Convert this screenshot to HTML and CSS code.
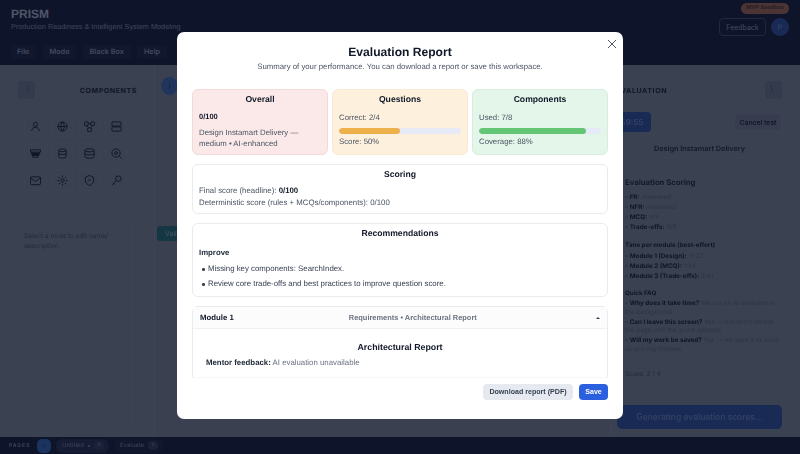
FILE: index.html
```html
<!DOCTYPE html>
<html lang="en">
<head>
<meta charset="utf-8">
<title>PRISM</title>
<link rel="stylesheet" href="styles.css">
</head>
<body>
<div class="app">
  <header class="top">
    <div class="top-row">
      <div class="brand">
        <div class="brand-name">PRISM</div>
        <div class="brand-sub">Production Readiness &amp; Intelligent System Modeling</div>
      </div>
      <div class="top-right">
        <span class="sandbox">MVP Sandbox</span>
        <div class="top-actions">
          <button class="feedback">Feedback</button>
          <span class="avatar">P</span>
        </div>
      </div>
    </div>
    <nav class="menu">
      <span class="menu-item">File</span>
      <span class="menu-item">Mode</span>
      <span class="menu-item">Black Box</span>
      <span class="menu-item">Help</span>
    </nav>
  </header>
  <main class="work">
    <aside class="left">
      <div class="panel-head">
        <span class="collapse">〈</span>
        <span class="panel-title">COMPONENTS</span>
      </div>
      <div class="palette">
        <span class="tile"><svg viewBox="0 0 24 24"><circle cx="12" cy="7.500" r="4.500"/><path d="M4 22c0-5 3-8 8-8s8 3 8 8"/></svg></span>
        <span class="tile"><svg viewBox="0 0 24 24"><circle cx="12" cy="12" r="10"/><path d="M2 12h20M12 2c-5 5-5 15 0 20M12 2c5 5 5 15 0 20"/></svg></span>
        <span class="tile"><svg viewBox="0 0 24 24"><rect x="1" y="2" width="8" height="8" rx="1.500"/><rect x="15" y="2" width="8" height="8" rx="1.500"/><rect x="8" y="15" width="8" height="8" rx="1.500"/><path d="M9 6h6M6 10l4 5M18 10l-4 5"/></svg></span>
        <span class="tile"><svg viewBox="0 0 24 24"><rect x="2" y="2" width="20" height="9" rx="1"/><rect x="2" y="13" width="20" height="9" rx="1"/></svg></span>
        <span class="tile"><svg viewBox="0 0 24 24"><path d="M1 4h22v5H1zM3 9l2 7h14l2-7M6 16v4h12v-4"/><path class="solid" d="M4 11h16l-1.500 5h-13z"/></svg></span>
        <span class="tile"><svg viewBox="0 0 24 24"><ellipse cx="12" cy="5" rx="8" ry="3"/><path d="M4 5v14c0 4 16 4 16 0V5M4 12c0 3 16 3 16 0"/></svg></span>
        <span class="tile"><svg viewBox="0 0 24 24"><ellipse cx="12" cy="5" rx="10" ry="3.500"/><path d="M2 5v14c0 4.500 20 4.500 20 0V5M2 12c0 4 20 4 20 0"/></svg></span>
        <span class="tile"><svg viewBox="0 0 24 24"><circle cx="11" cy="11" r="9"/><circle cx="11" cy="11" r="3"/><path d="M18 18l5 5"/></svg></span>
        <span class="tile"><svg viewBox="0 0 24 24"><rect x="1" y="4" width="22" height="17" rx="2"/><path d="M1 6l11 8 11-8"/></svg></span>
        <span class="tile"><svg viewBox="0 0 24 24"><circle cx="12" cy="12" r="3.500"/><path d="M12 1v4M12 19v4M1 12h4M19 12h4M4 4l3 3M17 17l3 3M4 20l3-3M17 7l3-3"/></svg></span>
        <span class="tile"><svg viewBox="0 0 24 24"><path d="M12 1l9 4v7c0 5-4 9-9 11-5-2-9-6-9-11V5z"/><path d="M9 11h6"/></svg></span>
        <span class="tile"><svg viewBox="0 0 24 24"><circle cx="16" cy="8" r="6"/><path d="M12 12L2 22M6 18l3 3"/></svg></span>
      </div>
      <div class="props">Select a node to edit name/ description.</div>
    </aside>
    <section class="canvas">
      <span class="info">i</span>
      <span class="node">Validate</span>
    </section>
    <aside class="right">
      <div class="panel-head">
        <span class="panel-title">EVALUATION</span>
        <span class="collapse">〉</span>
      </div>
      <div class="timer-row">
        <span class="timer">59:55</span>
        <button class="cancel">Cancel test</button>
      </div>
      <div class="problem">Design Instamart Delivery</div>
      <div class="scoring">
        <h4 class="scoring-title">Evaluation Scoring</h4>
        <ul class="mini">
          <li><b>FR:</b> Answered</li>
          <li><b>NFR:</b> Answered</li>
          <li><b>MCQ:</b> 4/4</li>
          <li><b>Trade-offs:</b> 6/6</li>
        </ul>
        <div class="mini-head">Time per module (best-effort)</div>
        <ul class="mini">
          <li><b>Module 1 (Design):</b> 11:32</li>
          <li><b>Module 2 (MCQ):</b> 1:24</li>
          <li><b>Module 3 (Trade-offs):</b> 2:41</li>
        </ul>
        <div class="mini-head faq-head">Quick FAQ</div>
        <ul class="mini faq">
          <li><b>Why does it take time?</b> We run an AI evaluator in the background.</li>
          <li><b>Can I leave this screen?</b> Yes — but don't refresh the page until the score appears.</li>
          <li><b>Will my work be saved?</b> Yes — we save it as soon as scoring finishes.</li>
        </ul>
        <div class="mini-score">Score: 2 / 4</div>
      </div>
      <button class="generate">Generating evaluation scores...</button>
    </aside>
  </main>
  <footer class="pages">
    <span class="pages-label">PAGES</span>
    <span class="add">+</span>
    <span class="chip chip-active">Untitled <i class="dot"></i><i class="chip-x">✕</i></span>
    <span class="chip">Evaluate <i class="chip-x">✕</i></span>
  </footer>
</div>

<div class="overlay">
  <div class="modal">
    <button class="close" aria-label="Close"><svg viewBox="0 0 12 12"><path d="M2 2l8 8M10 2l-8 8"/></svg></button>
    <div class="modal-head">
      <h2 class="modal-title">Evaluation Report</h2>
      <p class="modal-sub">Summary of your performance. You can download a report or save this workspace.</p>
    </div>
    <div class="modal-body">
      <div class="summary">
        <section class="stat stat-red">
          <h3 class="card-title">Overall</h3>
          <p class="stat-score"><b>0/100</b></p>
          <p class="stat-text">Design Instamart Delivery — medium • AI-enhanced</p>
        </section>
        <section class="stat stat-amber">
          <h3 class="card-title">Questions</h3>
          <p class="stat-line">Correct: 2/4</p>
          <div class="bar"><div class="fill fill-amber" style="width:50%"></div></div>
          <p class="stat-line">Score: 50%</p>
        </section>
        <section class="stat stat-green">
          <h3 class="card-title">Components</h3>
          <p class="stat-line">Used: 7/8</p>
          <div class="bar"><div class="fill fill-green" style="width:88%"></div></div>
          <p class="stat-line">Coverage: 88%</p>
        </section>
      </div>
      <section class="card scoring-card">
        <h3 class="card-title">Scoring</h3>
        <p class="card-line">Final score (headline): <b>0/100</b></p>
        <p class="card-line">Deterministic score (rules + MCQs/components): 0/100</p>
      </section>
      <section class="card recs">
        <h3 class="card-title">Recommendations</h3>
        <div class="improve">Improve</div>
        <ul class="rec-list">
          <li>Missing key components: SearchIndex.</li>
          <li>Review core trade-offs and best practices to improve question score.</li>
        </ul>
      </section>
      <section class="card module">
        <div class="module-head">
          <span class="module-name">Module 1</span>
          <span class="module-meta">Requirements • Architectural Report</span>
          <span class="caret"></span>
        </div>
        <div class="module-body">
          <h3 class="arch-title">Architectural Report</h3>
          <p class="mentor"><b>Mentor feedback:</b> AI evaluation unavailable</p>
        </div>
      </section>
    </div>
    <div class="modal-foot">
      <button class="btn btn-grey">Download report (PDF)</button>
      <button class="btn btn-blue">Save</button>
    </div>
  </div>
</div>
</body>
</html>
```
FILE: styles.css
```css
* { box-sizing: border-box; }
html, body { margin: 0; height: 100%; overflow: hidden; }
body { font-family: Inter, "Liberation Sans", sans-serif; color: #1b1d24; background: #7c7f85; text-rendering: geometricPrecision; }
button { font: inherit; }
ul, p, h2, h3, h4 { margin: 0; padding: 0; }

.app { height: 454px; display: flex; flex-direction: column; filter: blur(.6px); }
.top { height: 65px; background: #0e1226; flex: none; display: flex; flex-direction: column; }
.top-row { height: 42px; padding: 3px 11px 0; display: flex; justify-content: space-between; }
.brand { padding-top: 5px; }
.brand-name { font-size: 12px; font-weight: 700; line-height: 13px; color: #aeb2bd; font-family: "Liberation Sans", sans-serif; }
.brand-sub { font-size: 7.300px; line-height: 11px; color: #878c9c; font-family: "Liberation Sans", sans-serif; }
.top-right { display: flex; flex-direction: column; align-items: flex-end; gap: 4px; }
.sandbox { height: 11px; padding: 0 5px; border-radius: 6px; background: #a5603a; color: #4d2a1c; font-size: 5.500px; font-weight: 700; line-height: 11px; }
.top-actions { display: flex; align-items: center; gap: 5px; }
.feedback { width: 47px; height: 18px; padding: 0; border: 1px solid #3c4258; border-radius: 4px; background: transparent; color: #8d91a0; font-size: 7px; }
.avatar { width: 18px; height: 18px; border-radius: 50%; background: #2a4690; color: #6e83b8; font-size: 7.500px; display: flex; align-items: center; justify-content: center; }
.menu { padding: 3px 10px; display: flex; gap: 6px; align-items: flex-start; }
.menu-item { height: 14px; padding: 0 7px; border-radius: 3px; background: #161b2e; color: #8d91a0; font-size: 7.300px; font-weight: 600; line-height: 14px; }

.work { flex: 1; min-height: 0; display: grid; grid-template-columns: 155px 1fr 190px; background: #7c7f85; }
.left { padding: 16px 10px 8px; border-right: 1px solid #84878e; display: flex; flex-direction: column; }
.right { padding: 16px 18px 8px 6px; border-left: 1px solid #84878e; display: flex; flex-direction: column; }
.panel-head { display: flex; justify-content: space-between; align-items: center; height: 18px; padding-left: 8px; }
.panel-title { font-size: 7px; font-weight: 700; letter-spacing: .6px; color: #111318; padding-right: 7px; }
.right .panel-head { padding-left: 0; }
.right .panel-title { padding: 0; margin-left: -1px; }
.collapse { width: 17px; height: 18px; border-radius: 3px; background: #6c7079; color: #111318; font-size: 8px; display: flex; align-items: center; justify-content: center; }
.palette { margin: 16px 0 0 14px; display: grid; grid-template-columns: repeat(4, 22px); grid-auto-rows: 22px; gap: 5px; }
.tile { border: 1px solid #83868d; border-radius: 4px; display: flex; align-items: center; justify-content: center; }
.tile svg { width: 11px; height: 11px; fill: none; stroke: #111318; stroke-width: 2; }
.tile .solid { fill: #111318; }
.props { margin: 30px 12px 0 8px; padding: 9px 5px; flex: 1; border: 1px solid #83868d; border-radius: 3px; font-size: 6.500px; line-height: 10px; color: #43464d; }

.canvas { min-width: 0; padding: 12px 5px; display: flex; flex-direction: column; align-items: flex-start; gap: 131px; background: #7a7d83; }
.info { width: 17px; height: 18px; margin-left: 1px; border-radius: 50%; background: #3e5f9f; color: #15285e; font-size: 8px; display: flex; align-items: center; justify-content: center; }
.node { height: 15px; margin-left: -3px; padding: 0 8px; border-radius: 3px; background: #1f6663; color: #8fb0ae; font-size: 7px; line-height: 15px; }

.timer-row { display: flex; justify-content: space-between; align-items: center; margin-top: 13px; height: 20px; }
.timer { width: 38px; height: 20px; margin-left: -4px; border-radius: 4px; background: #2a4690; color: #6e83b8; font-size: 8px; font-weight: 600; display: flex; align-items: center; justify-content: center; }
.cancel { width: 48px; height: 18px; padding: 0; border: 1px solid #83868d; border-radius: 4px; background: #74777e; color: #111318; font-size: 6.800px; font-weight: 600; }
.problem { height: 18px; margin-top: 8px; border: 1px solid #83868d; border-radius: 3px; font-size: 7.300px; font-weight: 600; color: #1b1d24; line-height: 16px; text-align: center; }
.scoring { flex: 1; margin-top: 11px; padding: 7px 1px 0 8px; border-top: 1px solid #83868d; }
.scoring-title { font-size: 7.700px; font-weight: 700; line-height: 11px; color: #1b1d24; margin-bottom: 4px; }
.mini { list-style: none; font-size: 6.300px; line-height: 10px; color: #5c5f66; }
.mini li::before { content: "- "; color: #111318; }
.mini b { color: #111318; font-weight: 700; }
.mini-head { margin-top: 9px; font-size: 6.200px; line-height: 10px; font-weight: 700; color: #111318; }
.faq-head { margin-top: 8px; }
.faq li { line-height: 8.500px; margin-bottom: 1.500px; }
.mini-score { margin-top: 17px; font-size: 6.500px; color: #43464d; }
.generate { height: 24px; padding: 0; border: 0; border-radius: 5px; background: #2a4690; color: #6e83b8; font-size: 8.500px; font-weight: 500; }

.pages { height: 17px; flex: none; background: #0e1226; display: flex; align-items: center; padding: 0 9px; gap: 5px; color: #7c8192; font-size: 6px; }
.pages-label { letter-spacing: 1px; font-weight: 700; font-size: 5px; width: 23px; }
.add { width: 14px; height: 14px; border-radius: 5px; background: #2f5da8; color: #17335e; display: flex; align-items: center; justify-content: center; font-size: 7px; }
.chip { height: 14px; padding: 0 5px 0 6px; border-radius: 7px; background: #161b2e; display: flex; align-items: center; gap: 4px; }
.chip-active { background: #20253b; }
.chip i { font-style: normal; }
.dot { width: 2px; height: 2px; border-radius: 50%; background: #7c8192; }
.chip-x { width: 10px; height: 9px; border-radius: 4px; background: #2c3148; font-size: 4.500px; text-align: center; line-height: 9px; }

.overlay { position: fixed; inset: 0; display: flex; align-items: flex-start; justify-content: center; padding-top: 32px; background: rgba(15, 23, 46, 0.6); }
.modal { position: relative; width: 446px; height: 387px; background: #fff; border-radius: 7px; padding: 0 15px; display: flex; flex-direction: column; font-family: "Liberation Sans", Arial, sans-serif; color: #111827; will-change: transform; }
.close { position: absolute; top: 6px; right: 5px; width: 12px; height: 12px; padding: 0; border: 0; background: none; }
.close svg { width: 12px; height: 12px; display: block; fill: none; stroke: #4b5563; stroke-width: 1; }
.modal-head { padding-top: 12px; height: 57px; text-align: center; flex: none; }
.modal-title { font-size: 12.100px; line-height: 17px; font-weight: 700; color: #111827; }
.modal-sub { font-size: 7.800px; line-height: 10px; margin-top: 1px; color: #4b5563; }
.modal-body { flex: 1; min-height: 0; overflow: hidden; display: flex; flex-direction: column; gap: 9px; }
.summary { display: grid; grid-template-columns: repeat(3, 136px); gap: 4px; flex: none; }
.stat { height: 66px; padding: 4px 6px; border: 1px solid; border-radius: 6px; }
.stat-red { background: #fbe9e9; border-color: #f3d9d9; }
.stat-amber { background: #fdf1de; border-color: #f8ead3; }
.stat-green { background: #e4f5e9; border-color: #d7ecdf; }
.card-title { font-size: 8.650px; line-height: 11px; font-weight: 700; text-align: center; color: #111827; }
.stat-score { font-size: 7.500px; line-height: 10px; margin-top: 7px; color: #111827; }
.stat-text { font-size: 7.800px; line-height: 11px; margin-top: 5px; color: #4b5563; }
.stat-line { font-size: 7.800px; line-height: 10px; color: #4b5563; margin-top: 8px; }
.stat-line + .bar + .stat-line { margin-top: 3px; }
.bar { height: 6px; margin-top: 5px; border-radius: 3px; background: #e6eaf6; overflow: hidden; }
.fill { height: 100%; border-radius: 3px; }
.fill-amber { background: #edb04a; }
.fill-green { background: #63c675; }
.card { flex: none; background: #fff; border: 1px solid #e8ebf0; border-radius: 6px; }
.scoring-card { height: 50px; padding: 4px 6px; }
.card-line { font-size: 7.840px; line-height: 11.500px; color: #4b5563; }
.card-line b { color: #111827; }
.card-title + .card-line { margin-top: 5px; }
.recs { height: 74px; padding: 4px 6px; }
.improve { font-size: 7.800px; font-weight: 700; line-height: 10px; margin-top: 9px; color: #1f2937; }
.rec-list { list-style: none; margin-top: 6px; }
.rec-list li { font-size: 7.840px; line-height: 10px; margin-bottom: 5px; padding-left: 9px; position: relative; color: #374151; }
.rec-list li::before { content: ""; position: absolute; left: 3px; top: 4px; width: 2.500px; height: 2.500px; border-radius: 50%; background: #374151; }
.module { flex: none; }
.module-head { height: 22px; padding: 0 7px; background: #fcfcfd; border-bottom: 1px solid #eef0f4; display: flex; align-items: center; justify-content: space-between; }
.module-name { font-size: 7.800px; font-weight: 700; color: #111827; }
.module-meta { margin-left: 115px; margin-right: auto; font-size: 7.450px; font-weight: 700; color: #6b7280; white-space: nowrap; }
.caret { border-style: solid; border-color: transparent transparent #374151; border-width: 0 2px 2.500px; }
.module-body { padding: 13px 13px 20px; }
.arch-title { font-size: 8.800px; line-height: 11px; font-weight: 700; text-align: center; color: #111827; }
.mentor { font-size: 7.840px; line-height: 10px; margin-top: 5px; color: #6b7280; }
.mentor b { color: #1f2937; }
.modal-foot { height: 42px; flex: none; border-top: 1px solid #f6f7f9; display: flex; justify-content: flex-end; align-items: flex-start; gap: 6px; padding-top: 6px; }
.btn { height: 16px; padding: 0; border: 0; border-radius: 4px; font-size: 7.100px; font-weight: 700; }
.btn-grey { width: 90px; background: #e6e9f0; color: #374151; }
.btn-blue { width: 29px; background: #2a5fe0; color: #fff; }
```
